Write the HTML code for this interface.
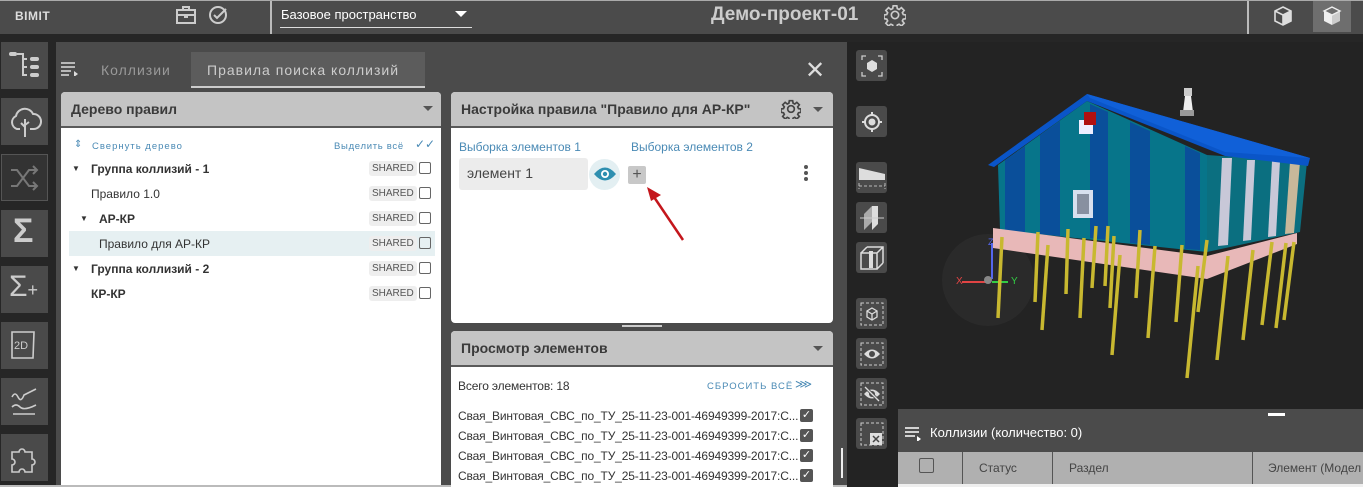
<!DOCTYPE html>
<html><head><meta charset="utf-8"><style>
*{box-sizing:border-box;margin:0;padding:0}
body{width:1363px;height:487px;overflow:hidden;background:#262626;font-family:"Liberation Sans","DejaVu Sans",sans-serif;position:relative}
.a{position:absolute}
.tile{position:absolute;left:1px;width:47px;height:47px;background:#4a4a4a}
.hdr{position:absolute;background:#c4c4c4;border-bottom:2px solid #5a5a5a;border-radius:4px 4px 0 0;font-weight:bold;font-size:14px;color:#3a3a3a;padding:9px 10px}
.row{position:absolute;left:69px;width:366px;height:25px;font-size:12px;color:#333}
.row span.t{position:absolute;top:6px}
.sh{position:absolute;left:300px;top:5px;background:#eee;color:#555;font-size:10px;padding:2px 3px;border-radius:3px}
.cb{position:absolute;left:350px;top:6px;width:12px;height:12px;border:1.5px solid #666;border-radius:2px}
.vb{position:absolute;left:856px;width:31px;height:31px;background:#4a4a4a;border-radius:3px}
.li{position:absolute;left:458px;font-size:12px;color:#333;white-space:nowrap;letter-spacing:-0.15px}
.ck{position:absolute;left:800px;width:13px;height:13px;background:#555;border-radius:2px;color:#fff;font-size:11px;line-height:13px;text-align:center}
</style></head><body>
<div class="a" style="left:0;top:0;width:1363px;height:34px;background:#4b4b4b;border-top:1px solid #aaa"></div>
<div class="a" style="left:15px;top:9px;color:#ddd;font-weight:bold;font-size:12px;letter-spacing:0.5px">BIMIT</div>
<svg class="a" style="left:175px;top:5px" width="22" height="20" viewBox="0 0 22 20"><rect x="2" y="5" width="18" height="13" fill="none" stroke="#ccc" stroke-width="2"/><path d="M8 5V2h6v3M2 10h18M10 9v3h2V9" fill="none" stroke="#ccc" stroke-width="2"/></svg>
<svg class="a" style="left:208px;top:5px" width="22" height="20" viewBox="0 0 22 20"><circle cx="10" cy="10" r="8" fill="none" stroke="#ccc" stroke-width="2"/><path d="M6 10l3 3 9-9" fill="none" stroke="#ccc" stroke-width="2"/></svg>
<div class="a" style="left:270px;top:1px;width:2px;height:33px;background:#bbb"></div>
<div class="a" style="left:281px;top:7px;color:#fff;font-size:13px">Базовое пространство</div>
<div class="a" style="left:455px;top:11px;width:0;height:0;border-left:6px solid transparent;border-right:6px solid transparent;border-top:6px solid #fff"></div>
<div class="a" style="left:280px;top:27px;width:192px;height:1px;background:#ddd"></div>
<div class="a" style="left:711px;top:4px;color:#ccc;font-weight:bold;font-size:19px">Демо-проект-01</div>
<svg class="a" style="left:884px;top:4px" width="22" height="22" viewBox="0 0 24 24"><path d="M12 8a4 4 0 1 0 0 8a4 4 0 1 0 0-8zM10 2h4l.5 3 2 1 2.5-2 3 3-2 2.5 1 2 3 .5v4l-3 .5-1 2 2 2.5-3 3-2.5-2-2 1-.5 3h-4l-.5-3-2-1-2.5 2-3-3 2-2.5-1-2-3-.5v-4l3-.5 1-2-2-2.5 3-3 2.5 2 2-1z" fill="none" stroke="#ccc" stroke-width="1.8"/></svg>
<div class="a" style="left:1247px;top:1px;width:2px;height:33px;background:#bbb"></div>
<svg class="a" style="left:1272px;top:5px" width="22" height="22" viewBox="0 0 22 22"><path d="M11 2l8 4v10l-8 4-8-4V6z" fill="none" stroke="#ddd" stroke-width="1.6"/><path d="M3 6l8 4 8-4M11 10v10" fill="none" stroke="#ddd" stroke-width="1.6"/><path d="M11 10l8-4v10l-8 4z" fill="#ddd"/></svg>
<div class="a" style="left:1313px;top:1px;width:38px;height:31px;background:#6e6e6e"></div>
<svg class="a" style="left:1321px;top:5px" width="22" height="22" viewBox="0 0 22 22"><path d="M3 6l8 4v10l-8-4z" fill="#eee"/><path d="M11 10l8-4v10l-8 4z" fill="#ccc"/><path d="M3 6l8-4 8 4-8 4z" fill="none" stroke="#eee" stroke-width="1.4"/></svg>

<div class="tile" style="top:42px"></div>
<svg class="a" style="left:8px;top:50px" width="34" height="32" viewBox="0 0 34 32"><rect x="1" y="2" width="8" height="4" rx="2" fill="#ccc"/><path d="M9 4h6v22" stroke="#ccc" stroke-width="2" fill="none"/><path d="M15 9h4M15 17h4M15 25h4" stroke="#ccc" stroke-width="2"/><rect x="22" y="7" width="9" height="4" rx="2" fill="#ccc"/><rect x="22" y="15" width="9" height="4" rx="2" fill="#ccc"/><rect x="22" y="23" width="9" height="4" rx="2" fill="#ccc"/></svg>
<div class="tile" style="top:98px"></div>
<svg class="a" style="left:8px;top:105px" width="34" height="34" viewBox="0 0 34 34"><path d="M12 24H9a7 7 0 0 1-1-13a9 9 0 0 1 17-2a7 7 0 0 1 1 15h-4" fill="none" stroke="#ccc" stroke-width="2"/><path d="M17 14v18M17 22l-4-4M17 20l4-3" stroke="#ccc" stroke-width="2" fill="none"/></svg>
<div class="tile" style="top:154px;background:#333;border:1px solid #555"></div>
<svg class="a" style="left:9px;top:162px" width="32" height="32" viewBox="0 0 32 32"><path d="M2 8h6l12 16h8M2 24h6l12-16h8M24 4l4 4-4 4M24 20l4 4-4 4" fill="none" stroke="#777" stroke-width="2"/></svg>
<div class="tile" style="top:210px"></div>
<div class="a" style="left:13px;top:212px;color:#ccc;font-size:34px;font-weight:bold">Σ</div>
<div class="tile" style="top:266px"></div>
<div class="a" style="left:9px;top:270px;color:#ccc;font-size:30px">Σ<span style="font-size:18px">+</span></div>
<div class="tile" style="top:322px"></div>
<svg class="a" style="left:10px;top:330px" width="28" height="32" viewBox="0 0 28 32"><path d="M2 2h22l-1 26H2z" fill="none" stroke="#ccc" stroke-width="1.6"/><text x="4" y="19" font-size="11" fill="#ccc" font-family="Liberation Sans">2D</text></svg>
<div class="tile" style="top:378px"></div>
<svg class="a" style="left:10px;top:385px" width="28" height="32" viewBox="0 0 28 32"><path d="M2 12q3-6 6 0t6-2l12-6M2 22q4-4 8 0t16-2M3 29h22" fill="none" stroke="#ccc" stroke-width="1.6"/></svg>
<div class="tile" style="top:434px"></div>
<svg class="a" style="left:10px;top:442px" width="30" height="32" viewBox="0 0 30 32"><path d="M2 10h7a3 3 0 1 1 6 0h7v7a3 3 0 1 1 0 6v7H15a3 3 0 1 0-6 0H2v-7a3 3 0 1 0 0-6z" fill="none" stroke="#ccc" stroke-width="1.6"/></svg>

<div class="a" style="left:56px;top:42px;width:791px;height:445px;background:#4b4b4b"></div>
<svg class="a" style="left:61px;top:62px" width="18" height="14" viewBox="0 0 18 14"><path d="M0 1h14M0 5h14M0 9h10M0 13h8" stroke="#ddd" stroke-width="1.6"/><path d="M13 9l4 3-4 3z" fill="#ddd"/></svg>
<div class="a" style="left:101px;top:62px;color:#999;font-size:14px;letter-spacing:1px">Коллизии</div>
<div class="a" style="left:191px;top:52px;width:234px;height:36px;background:#5c5c5c;border-bottom:2px solid #ccc"></div>
<div class="a" style="left:207px;top:62px;color:#ccc;font-size:14px;letter-spacing:1px">Правила поиска коллизий</div>
<div class="a" style="left:805px;top:56px;color:#ddd;font-size:24px;font-weight:300">✕</div>

<div class="a" style="left:61px;top:92px;width:380px;height:395px;background:#fff;border-radius:4px 4px 0 0"></div>
<div class="hdr" style="left:61px;top:92px;width:380px;height:36px">Дерево правил</div>
<div class="a" style="left:423px;top:106px;border-left:5px solid transparent;border-right:5px solid transparent;border-top:5px solid #555"></div>
<div class="a" style="left:74px;top:139px;color:#4a8ab5;font-size:10px">⇕</div>
<div class="a" style="left:92px;top:141px;color:#4a8ab5;font-size:9.5px;letter-spacing:1px">Свернуть дерево</div>
<div class="a" style="left:334px;top:141px;color:#4a8ab5;font-size:9.5px;letter-spacing:0.7px">Выделить всё</div>
<div class="a" style="left:415px;top:137px;color:#4a8ab5;font-size:12px">✓✓</div>
<div class="row" style="top:156px"><span class="t" style="left:3px;font-size:8px;top:8px">▼</span><span class="t" style="left:22px;font-weight:bold">Группа коллизий - 1</span><span class="sh">SHARED</span><span class="cb"></span></div>
<div class="row" style="top:181px"><span class="t" style="left:22px">Правило 1.0</span><span class="sh">SHARED</span><span class="cb"></span></div>
<div class="row" style="top:206px"><span class="t" style="left:11px;font-size:8px;top:8px">▼</span><span class="t" style="left:30px;font-weight:bold">АР-КР</span><span class="sh">SHARED</span><span class="cb"></span></div>
<div class="row" style="top:231px;background:#e6f0f2"><span class="t" style="left:30px">Правило для АР-КР</span><span class="sh">SHARED</span><span class="cb"></span></div>
<div class="row" style="top:256px"><span class="t" style="left:3px;font-size:8px;top:8px">▼</span><span class="t" style="left:22px;font-weight:bold">Группа коллизий - 2</span><span class="sh">SHARED</span><span class="cb"></span></div>
<div class="row" style="top:281px"><span class="t" style="left:22px;font-weight:bold">КР-КР</span><span class="sh">SHARED</span><span class="cb"></span></div>
<div class="a" style="left:0;top:485px;width:847px;height:2px;background:#bbb"></div>

<div class="a" style="left:451px;top:92px;width:382px;height:231px;background:#fff;border-radius:4px"></div>
<div class="hdr" style="left:451px;top:92px;width:382px;height:36px">Настройка правила "Правило для АР-КР"</div>
<svg class="a" style="left:781px;top:99px" width="20" height="20" viewBox="0 0 24 24"><path d="M12 8a4 4 0 1 0 0 8a4 4 0 1 0 0-8zM10 2h4l.5 3 2 1 2.5-2 3 3-2 2.5 1 2 3 .5v4l-3 .5-1 2 2 2.5-3 3-2.5-2-2 1-.5 3h-4l-.5-3-2-1-2.5 2-3-3 2-2.5-1-2-3-.5v-4l3-.5 1-2-2-2.5 3-3 2.5 2 2-1z" fill="none" stroke="#444" stroke-width="2"/></svg>
<div class="a" style="left:813px;top:107px;border-left:5px solid transparent;border-right:5px solid transparent;border-top:5px solid #555"></div>
<div class="a" style="left:459px;top:140px;color:#4a8ab5;font-size:12px">Выборка элементов 1</div>
<div class="a" style="left:631px;top:140px;color:#4a8ab5;font-size:12px">Выборка элементов 2</div>
<div class="a" style="left:459px;top:158px;width:129px;height:32px;background:#ececec;border-radius:3px;color:#444;font-size:14px;padding:7px 8px">элемент 1</div>
<div class="a" style="left:589px;top:159px;width:31px;height:31px;border-radius:50%;background:#e3eff2"></div>
<svg class="a" style="left:593px;top:165px" width="24" height="18" viewBox="0 0 24 18"><path d="M1 9q11-13 22 0q-11 13-22 0z" fill="#2e8fb0"/><circle cx="12" cy="9" r="4" fill="#fff"/><circle cx="12" cy="9" r="2.2" fill="#2e8fb0"/></svg>
<div class="a" style="left:628px;top:166px;width:18px;height:18px;background:#c8c8c8;border-radius:2px;color:#555;font-size:16px;line-height:17px;text-align:center">+</div>
<svg class="a" style="left:640px;top:185px" width="50" height="60" viewBox="0 0 50 60"><path d="M43 55L14 12" stroke="#c4161c" stroke-width="2.5"/><path d="M7 2l14 8-10 6z" fill="#c4161c"/></svg>
<div class="a" style="left:804px;top:165px;width:4px;height:4px;border-radius:50%;background:#555;box-shadow:0 6px 0 #555,0 12px 0 #555"></div>
<div class="a" style="left:622px;top:325px;width:40px;height:2px;background:#ccc"></div>

<div class="a" style="left:451px;top:331px;width:382px;height:156px;background:#fff;border-radius:4px 4px 0 0"></div>
<div class="hdr" style="left:451px;top:331px;width:382px;height:36px">Просмотр элементов</div>
<div class="a" style="left:813px;top:346px;border-left:5px solid transparent;border-right:5px solid transparent;border-top:5px solid #555"></div>
<div class="li" style="top:379px">Всего элементов: 18</div>
<div class="a" style="left:707px;top:381px;color:#4a8ab5;font-size:9.5px;letter-spacing:1px">СБРОСИТЬ ВСЁ</div>
<div class="a" style="left:795px;top:377px;color:#4a8ab5;font-size:12px">⋙</div>
<div class="li" style="top:409px">Свая_Винтовая_СВС_по_ТУ_25-11-23-001-46949399-2017:С...</div><div class="ck" style="top:409px">✓</div>
<div class="li" style="top:429px">Свая_Винтовая_СВС_по_ТУ_25-11-23-001-46949399-2017:С...</div><div class="ck" style="top:429px">✓</div>
<div class="li" style="top:449px">Свая_Винтовая_СВС_по_ТУ_25-11-23-001-46949399-2017:С...</div><div class="ck" style="top:449px">✓</div>
<div class="li" style="top:469px">Свая_Винтовая_СВС_по_ТУ_25-11-23-001-46949399-2017:С...</div><div class="ck" style="top:469px">✓</div>

<div class="a" style="left:847px;top:42px;width:516px;height:445px;background:#232323"></div>
<div class="a" style="left:841px;top:448px;width:2px;height:30px;background:#eee"></div>
<svg class="a" style="left:0;top:0" width="1363" height="487" viewBox="0 0 1363 487">
<circle cx="988" cy="280" r="46" fill="#2a2a2a"/>
<path d="M992 243v36" stroke="#5566ee" stroke-width="2"/><path d="M962 282h28" stroke="#e04444" stroke-width="2"/><path d="M992 282h16" stroke="#33cc44" stroke-width="2"/>
<circle cx="988" cy="280" r="4" fill="#888"/>
<text x="956" y="284" font-size="10" fill="#e04444" font-family="Liberation Sans">X</text><text x="1011" y="284" font-size="10" fill="#33cc44" font-family="Liberation Sans">Y</text><text x="988" y="245" font-size="9" fill="#5566ee" font-family="Liberation Sans">Z</text>
<polygon points="998,165 1087,101 1207,155 1207,252 1000,230" fill="#07758a"/>
<polygon points="1207,155 1307,162 1300,232 1207,252" fill="#0b6f80"/>
<g fill="#0a4f9a"><polygon points="1005,160 1025,146 1025,232 1005,230"/><polygon points="1040,135 1060,121 1060,236 1040,234"/><polygon points="1090,104 1108,112 1108,240 1090,238"/><polygon points="1130,122 1150,131 1150,245 1130,243"/><polygon points="1185,146 1200,153 1200,250 1185,249"/></g>
<g fill="#c8c8d8"><polygon points="1222,158 1232,158 1228,245 1218,246"/><polygon points="1247,160 1255,160 1251,240 1243,241"/><polygon points="1272,161 1280,161 1276,236 1268,237"/></g>
<polygon points="1290,162 1300,162 1294,233 1285,234" fill="#c8b89a"/>
<rect x="1079" y="120" width="14" height="14" fill="#eef"/><rect x="1073" y="190" width="20" height="28" fill="#d8e0ee"/><rect x="1077" y="194" width="12" height="20" fill="#8890a0"/>
<rect x="1084" y="112" width="12" height="13" fill="#b01010"/>
<polygon points="988,165 1087,94 1310,158 1308,166 1225,156 1087,101 994,167" fill="#0a55c8"/>
<polygon points="1087,94 1310,158 1225,152 1090,98" fill="#1060d8"/>
<rect x="1184" y="88" width="8" height="8" fill="#ccc"/><polygon points="1185,96 1191,96 1193,112 1183,112" fill="#eee"/><rect x="1180" y="110" width="14" height="6" fill="#999"/>
<polygon points="993,228 1207,256 1297,233 1297,244 1207,279 993,248" fill="#e8b8b8"/>
<g stroke="#c8b830" stroke-width="3.5">
<line x1="1002" y1="237" x2="998" y2="318"/><line x1="1038" y1="232" x2="1035" y2="302"/><line x1="1048" y1="245" x2="1042" y2="330"/><line x1="1068" y1="229" x2="1066" y2="294"/><line x1="1084" y1="238" x2="1080" y2="318"/><line x1="1096" y1="226" x2="1092" y2="288"/><line x1="1108" y1="226" x2="1105" y2="286"/><line x1="1114" y1="236" x2="1110" y2="308"/><line x1="1120" y1="255" x2="1112" y2="355"/><line x1="1140" y1="230" x2="1136" y2="298"/><line x1="1155" y1="246" x2="1148" y2="338"/><line x1="1182" y1="245" x2="1176" y2="322"/><line x1="1198" y1="266" x2="1187" y2="378"/><line x1="1207" y1="240" x2="1198" y2="312"/><line x1="1228" y1="256" x2="1217" y2="360"/><line x1="1253" y1="250" x2="1243" y2="340"/><line x1="1272" y1="242" x2="1262" y2="325"/><line x1="1286" y1="243" x2="1276" y2="328"/><line x1="1294" y1="242" x2="1284" y2="320"/>
</g>
</svg>
<div class="vb" style="top:50px"></div>
<svg class="a" style="left:860px;top:54px" width="24" height="24" viewBox="0 0 24 24"><path d="M2 6V2h4M18 2h4v4M22 18v4h-4M6 22H2v-4" stroke="#ccc" fill="none" stroke-width="1.3"/><path d="M12 6l5 3v6l-5 3-5-3V9z" fill="#ddd"/></svg>
<div class="vb" style="top:106px"></div>
<svg class="a" style="left:861px;top:111px" width="22" height="22" viewBox="0 0 22 22"><circle cx="11" cy="11" r="7" fill="none" stroke="#ddd" stroke-width="2"/><circle cx="11" cy="11" r="3.5" fill="#ddd"/><path d="M11 1v3M11 18v3M1 11h3M18 11h3" stroke="#ddd" stroke-width="2"/></svg>
<div class="vb" style="top:162px"></div>
<svg class="a" style="left:857px;top:166px" width="30" height="26" viewBox="0 0 30 26"><polygon points="2,2 28,8 28,14 2,14" fill="#ddd"/><path d="M2 20h26M2 17v6M28 17v6" stroke="#bbb" stroke-dasharray="3 2"/></svg>
<div class="vb" style="top:202px"></div>
<svg class="a" style="left:858px;top:204px" width="28" height="28" viewBox="0 0 28 28"><polygon points="14,2 14,26 20,20 20,2" fill="#ddd"/><polygon points="14,2 6,10 6,26 14,18" fill="#aaa"/><path d="M2 14h24" stroke="#ccc"/></svg>
<div class="vb" style="top:242px"></div>
<svg class="a" style="left:859px;top:245px" width="26" height="26" viewBox="0 0 26 26"><path d="M2 8h16v16H2zM8 2h16v16M2 8l6-6M18 8l6-6M18 24l6-6" fill="none" stroke="#ddd" stroke-width="1.5"/><rect x="10" y="6" width="4" height="17" fill="#ddd"/></svg>
<div class="vb" style="top:298px"></div>
<svg class="a" style="left:860px;top:302px" width="24" height="24" viewBox="0 0 24 24"><rect x="1" y="1" width="22" height="22" fill="none" stroke="#ccc" stroke-dasharray="3 2"/><path d="M12 6l5 3v6l-5 3-5-3V9zM7 9l5 3 5-3M12 12v6" fill="none" stroke="#ddd" stroke-width="1.3"/></svg>
<div class="vb" style="top:338px"></div>
<svg class="a" style="left:860px;top:342px" width="24" height="24" viewBox="0 0 24 24"><rect x="1" y="1" width="22" height="22" fill="none" stroke="#ccc" stroke-dasharray="3 2"/><path d="M4 12q8-9 16 0q-8 9-16 0z" fill="#ddd"/><circle cx="12" cy="12" r="3" fill="#4a4a4a"/></svg>
<div class="vb" style="top:378px"></div>
<svg class="a" style="left:860px;top:382px" width="24" height="24" viewBox="0 0 24 24"><rect x="1" y="1" width="22" height="22" fill="none" stroke="#ccc" stroke-dasharray="3 2"/><path d="M4 12q8-9 16 0q-8 9-16 0z" fill="#ddd"/><circle cx="12" cy="12" r="3" fill="#4a4a4a"/><path d="M5 5l14 14" stroke="#4a4a4a" stroke-width="3"/><path d="M5 5l14 14" stroke="#ddd" stroke-width="1.3"/></svg>
<div class="vb" style="top:418px"></div>
<svg class="a" style="left:860px;top:422px" width="24" height="24" viewBox="0 0 24 24"><rect x="1" y="1" width="22" height="22" fill="none" stroke="#ccc" stroke-dasharray="3 2"/><rect x="10" y="11" width="12" height="12" fill="#ddd"/><path d="M13 14l6 6M19 14l-6 6" stroke="#444" stroke-width="1.5"/></svg>

<div class="a" style="left:898px;top:409px;width:465px;height:78px;background:#4b4b4b"></div>
<div class="a" style="left:1268px;top:413px;width:17px;height:3px;background:#fff"></div>
<svg class="a" style="left:905px;top:427px" width="18" height="14" viewBox="0 0 18 14"><path d="M0 1h14M0 5h14M0 9h10" stroke="#fff" stroke-width="1.6"/><path d="M12 9l4 3-4 3z" fill="#fff"/></svg>
<div class="a" style="left:930px;top:425px;color:#fff;font-size:13px">Коллизии (количество: 0)</div>
<div class="a" style="left:898px;top:452px;width:465px;height:32px;background:#b0b0b0"></div>
<div class="a" style="left:919px;top:458px;width:15px;height:15px;border:1.5px solid #555;border-radius:2px"></div>
<div class="a" style="left:962px;top:452px;width:1px;height:32px;background:#555"></div>
<div class="a" style="left:1052px;top:452px;width:1px;height:32px;background:#555"></div>
<div class="a" style="left:1252px;top:452px;width:1px;height:32px;background:#555"></div>
<div class="a" style="left:979px;top:461px;color:#444;font-size:12px">Статус</div>
<div class="a" style="left:1069px;top:461px;color:#444;font-size:12px">Раздел</div>
<div class="a" style="left:1268px;top:461px;color:#444;font-size:12px;white-space:nowrap">Элемент (Модел</div>
<div class="a" style="left:898px;top:484px;width:465px;height:3px;background:#eee"></div>
</body></html>
